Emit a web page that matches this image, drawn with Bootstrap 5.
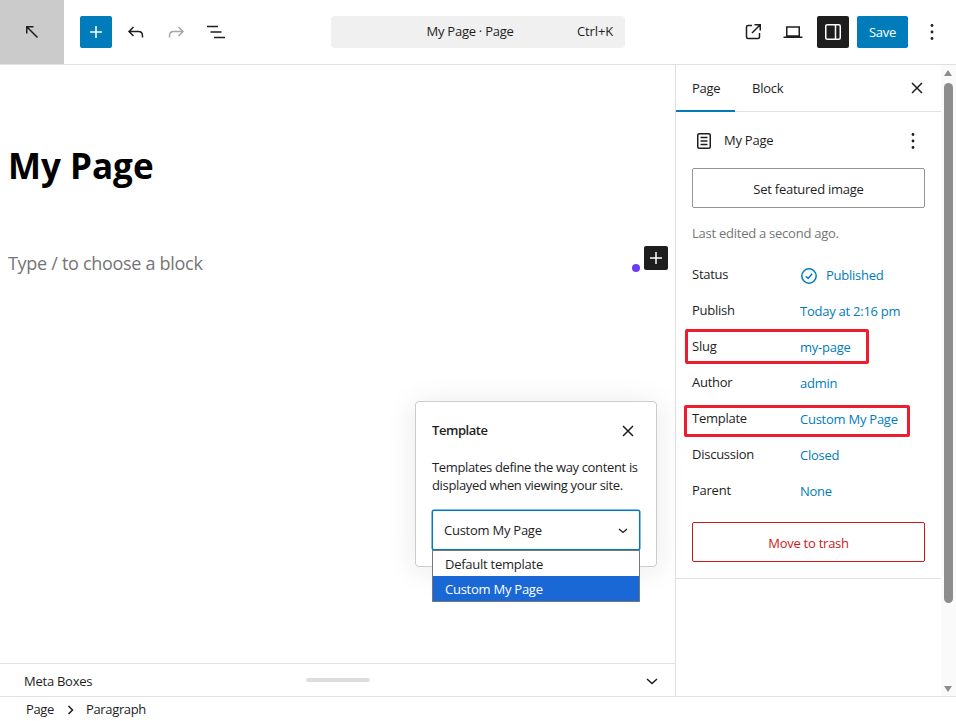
<!DOCTYPE html>
<html lang="en">
<head>
  <meta charset="UTF-8">
  <title>Edit Page</title>
  <meta name="viewport" content="width=device-width, initial-scale=1">
  <link href="https://cdn.jsdelivr.net/npm/bootstrap@5.3.0/dist/css/bootstrap.min.css" rel="stylesheet">
  <style>
    html, body { height: 100%; overflow: hidden; }
    body {
      font-family: "Open Sans", "Noto Sans", "Liberation Sans", sans-serif;
      font-size: 13px;
      letter-spacing: -0.25px;
      color: #1e1e1e;
      background: #fff;
    }
    .shell { height: 721px; }
    .topbar { height: 65px; border-bottom: 1px solid #e0e0e0; }
    .wp-logo { width: 64px; height: 64px; background: #cbcbcb; }
    .tool-left { padding-left: 16px; gap: 8px; width: 267px; }
    .icon-btn { width: 32px; height: 32px; border-radius: 2px; color: #1e1e1e; }
    .icon-btn.is-blue { background: #007cba; color: #fff; }
    .icon-btn.is-dark { background: #1e1e1e; color: #fff; }
    .icon-btn.is-off { color: #a7a7a7; }
    .cmd-bar {
      width: 294px; height: 32px; background: #f0f0f0; border-radius: 4px;
      padding: 0 12px 0 0;
    }
    .cmd-title { flex: 1; text-align: center; padding-left: 32px; }
    .cmd-key { letter-spacing: -0.15px; }
    .tool-right { padding-right: 8px; gap: 8px; }
    .save-btn {
      width: 51px; height: 32px; background: #007cba; color: #fff; border-radius: 2px;
      font-size: 13px; letter-spacing: -.25px; padding: 2px 0 0;
    }
    .editor-col { width: 676px; border-right: 1px solid #e0e0e0; }
    .canvas { flex: 1; }
    .page-title {
      font-family: "Open Sans", "Noto Sans", sans-serif;
      font-size: 35px; font-weight: 700; color: #000; line-height: 40px;
      letter-spacing: 0; padding: 81px 0 0 8px; margin: 0;
    }
    .placeholder-line { font-size: 18px; color: #757575; padding: 64px 0 0 8px; letter-spacing: -0.3px; line-height: 26px; }
    .purple-dot { position: absolute; left: 632px; top: 199px; width: 8px; height: 8px; border-radius: 50%; background: #6c3cf0; }
    .add-block { position: absolute; left: 644px; top: 181px; width: 24px; height: 24px; background: #1e1e1e; color: #fff; border-radius: 2px; }
    .tpl-pop {
      position: absolute; left: 415px; top: 336px; width: 242px; height: 166px;
      background: #fff; border: 1px solid #ccc; border-radius: 4px;
      box-shadow: 0 3px 30px rgba(25, 30, 35, .1); padding: 16px;
    }
    .tpl-head { height: 26px; font-weight: 600; margin-bottom: 14px; letter-spacing: -.45px; }
    .tpl-text { line-height: 18px; margin: 0 0 16px; letter-spacing: -.35px; white-space: nowrap; }
    .tpl-select {
      height: 40px; border: 1px solid #007cba; border-radius: 2px; padding: 1px 11px 0;
      box-shadow: 0 0 0 .5px #007cba; background: #fff; width: 208px;
    }
    .tpl-options {
      position: absolute; left: 16px; top: 148px; width: 208px; height: 52px;
      background: #fff; border: 1px solid #767676;
    }
    .tpl-opt { height: 25px; padding: 2px 0 0 12px; display: flex; align-items: center; }
    .tpl-opt.is-active { background: #1a68d6; color: #fff; }
    .meta-bar { height: 33px; border-top: 1px solid #e0e0e0; padding: 3px 17px 0 24px; position: relative; }
    .resize-handle { position: absolute; left: 306px; top: 14px; width: 64px; height: 4px; background: #ddd; border-radius: 2px; }
    .side-col { width: 265px; }
    .side-tabs { height: 47px; border-bottom: 1px solid #e0e0e0; }
    .side-tab { height: 47px; padding: 0 16px; display: flex; align-items: center; margin-bottom: -1px; }
    .side-tab.is-on { box-shadow: inset 0 -2px 0 #007cba; width: 59px; margin-right: 1px; }
    .side-x { margin-right: 12px; }
    .side-body { padding: 16px; border-bottom: 1px solid #e0e0e0; height: 467px; }
    .doc-head { height: 26px; margin-bottom: 14px; }
    .featured-btn {
      height: 40px; border: 1px solid #949494; border-radius: 2px; background: #fff;
      width: 233px; font-size: 13px; letter-spacing: -.25px; color: #1e1e1e; padding: 3px 0 0;
    }
    .edited-note { color: #757575; margin: 16px 0 15px; line-height: 18px; }
    .prop-row { height: 36px; display: flex; align-items: center; position: relative; }
    .prop-label { width: 108px; }
    .prop-value { color: #007cba; padding-top: 2px; }
    .red-box { position: absolute; border: 3px solid #ed1c2e; border-radius: 2px; }
    .red-slug { left: -7px; top: 0; width: 184px; height: 35px; }
    .red-template { left: -8px; top: 4px; width: 226px; height: 32px; }
    .trash-btn {
      height: 40px; width: 233px; border: 1px solid #cc1818; border-radius: 2px;
      background: #fff; color: #cc1818; margin-top: 13px; font-size: 13px; letter-spacing: -.25px; padding: 3px 0 0;
    }
    .fake-scroll { width: 15px; background: #fafafa; position: relative; }
    .scroll-up, .scroll-down { position: absolute; left: 3px; width: 0; height: 0; border-left: 4.5px solid transparent; border-right: 4.5px solid transparent; }
    .scroll-up { top: 5px; border-bottom: 6px solid #8d8d8d; }
    .scroll-down { bottom: 4px; border-top: 6px solid #8d8d8d; }
    .scroll-thumb { position: absolute; left: 3px; top: 18px; width: 9px; height: 520px; background: #8d8d8d; border-radius: 5px; }
    .status-foot { height: 25px; border-top: 1px solid #e0e0e0; padding: 2px 0 0 26px; gap: 12px; letter-spacing: -.35px; }
    .status-foot svg { margin-left: 1px; }
  </style>
</head>
<body>
<div class="shell d-flex flex-column">

  <div class="topbar d-flex align-items-center">
    <div class="wp-logo d-flex align-items-center justify-content-center">
      <svg width="24" height="24" viewBox="0 0 24 24" fill="none" stroke="#1e1e1e" stroke-width="1.5"><path d="M6 6.750h7.500M6.750 6v7.500M6.500 6.500l11 11"/></svg>
    </div>
    <div class="tool-left d-flex align-items-center">
      <div class="icon-btn is-blue d-flex align-items-center justify-content-center">
        <svg width="24" height="24" viewBox="0 0 24 24" fill="none" stroke="currentColor" stroke-width="1.5"><path d="M12 6v12M6 12h12"/></svg>
      </div>
      <div class="icon-btn d-flex align-items-center justify-content-center">
        <svg width="24" height="24" viewBox="0 0 24 24" fill="none" stroke="currentColor" stroke-width="1.5"><path d="M9.500 7 5 11.500 9.500 16M5 11.500h9.500c2.500 0 4 1.500 4 4.500v1.500"/></svg>
      </div>
      <div class="icon-btn is-off d-flex align-items-center justify-content-center">
        <svg width="24" height="24" viewBox="0 0 24 24" fill="none" stroke="currentColor" stroke-width="1.5"><path d="M14.500 7 19 11.500 14.500 16M19 11.500H9.500c-2.500 0-4 1.500-4 4.500v1.500"/></svg>
      </div>
      <div class="icon-btn d-flex align-items-center justify-content-center">
        <svg width="24" height="24" viewBox="0 0 24 24" fill="none" stroke="currentColor" stroke-width="1.5"><path d="M3 6.500h11M6.500 12h11M10 17.500h11"/></svg>
      </div>
    </div>
    <div class="cmd-bar d-flex align-items-center">
      <span class="cmd-title">My Page · Page</span>
      <span class="cmd-key">Ctrl+K</span>
    </div>
    <div class="tool-right ms-auto d-flex align-items-center">
      <div class="icon-btn d-flex align-items-center justify-content-center">
        <svg width="24" height="24" viewBox="0 0 24 24" fill="none" stroke="currentColor" stroke-width="1.5"><path d="M11 5.500H7A1.500 1.500 0 0 0 5.500 7v10A1.500 1.500 0 0 0 7 18.500h10a1.500 1.500 0 0 0 1.500-1.500v-4M13.500 4.750h5.750v5.750M19 5l-8 8"/></svg>
      </div>
      <div class="icon-btn d-flex align-items-center justify-content-center">
        <svg width="24" height="24" viewBox="0 0 24 24" fill="none" stroke="currentColor" stroke-width="1.500"><path d="M5.750 7h12.500v9H5.750zM2.500 17.250h19"/></svg>
      </div>
      <div class="icon-btn is-dark d-flex align-items-center justify-content-center">
        <svg width="24" height="24" viewBox="0 0 24 24" fill="none" stroke="currentColor" stroke-width="1.500"><rect x="4.750" y="4.750" width="14.500" height="14.500" rx="1.500"/><path d="M14.500 5v14"/></svg>
      </div>
      <button type="button" class="btn save-btn border-0">Save</button>
      <div class="icon-btn d-flex align-items-center justify-content-center">
        <svg width="24" height="24" viewBox="0 0 24 24" fill="currentColor"><circle cx="12" cy="5.500" r="1.400"/><circle cx="12" cy="12" r="1.400"/><circle cx="12" cy="18.500" r="1.400"/></svg>
      </div>
    </div>
  </div>

  <div class="d-flex flex-grow-1 overflow-hidden">
    <div class="editor-col d-flex flex-column">
      <div class="canvas position-relative">
        <h1 class="page-title">My Page</h1>
        <div class="placeholder-line">Type / to choose a block</div>
        <span class="purple-dot"></span>
        <div class="add-block d-flex align-items-center justify-content-center">
          <svg width="24" height="24" viewBox="0 0 24 24" fill="none" stroke="currentColor" stroke-width="1.500"><path d="M12 6v12M6 12h12"/></svg>
        </div>

        <div class="tpl-pop">
          <div class="tpl-head d-flex align-items-center justify-content-between">
            <span>Template</span>
            <svg width="24" height="24" viewBox="0 0 24 24" fill="none" stroke="#1e1e1e" stroke-width="1.500"><path d="M7 7l10 10M17 7 7 17"/></svg>
          </div>
          <p class="tpl-text">Templates define the way content is<br>displayed when viewing your site.</p>
          <div class="tpl-select d-flex align-items-center justify-content-between">
            <span>Custom My Page</span>
            <svg width="10" height="6" viewBox="0 0 10 6" fill="none" stroke="#1e1e1e" stroke-width="1.300"><path d="M1 1l4 3.500L9 1"/></svg>
          </div>
          <div class="tpl-options">
            <div class="tpl-opt">Default template</div>
            <div class="tpl-opt is-active">Custom My Page</div>
          </div>
        </div>
      </div>
      <div class="meta-bar d-flex align-items-center justify-content-between">
        <span>Meta Boxes</span>
        <span class="resize-handle"></span>
        <svg width="12" height="7" viewBox="0 0 12 7" fill="none" stroke="#1e1e1e" stroke-width="1.500"><path d="M1 1l5 4.500L11 1"/></svg>
      </div>
    </div>

    <div class="side-col">
      <div class="side-tabs d-flex align-items-center">
        <div class="side-tab is-on">Page</div>
        <div class="side-tab">Block</div>
        <svg class="ms-auto side-x" width="24" height="24" viewBox="0 0 24 24" fill="none" stroke="#1e1e1e" stroke-width="1.500"><path d="M7 7l10 10M17 7 7 17"/></svg>
      </div>
      <div class="side-body">
        <div class="doc-head d-flex align-items-center">
          <svg width="24" height="24" viewBox="0 0 24 24" fill="none" stroke="#1e1e1e" stroke-width="1.500"><rect x="5.750" y="4.750" width="12.500" height="14.500" rx="1.500"/><path d="M8.500 8.500h7M8.500 12h7M8.500 15.500h7"/></svg>
          <span class="ms-2">My Page</span>
          <svg class="ms-auto" width="24" height="24" viewBox="0 0 24 24" fill="#1e1e1e"><circle cx="12" cy="5.500" r="1.400"/><circle cx="12" cy="12" r="1.400"/><circle cx="12" cy="18.500" r="1.400"/></svg>
        </div>
        <button type="button" class="btn featured-btn">Set featured image</button>
        <p class="edited-note">Last edited a second ago.</p>
        <div class="prop-row"><span class="prop-label">Status</span>
          <span class="prop-value d-flex align-items-center">
            <svg width="18" height="18" viewBox="0 0 18 18" fill="none" stroke="#007cba" stroke-width="1.500"><circle cx="9" cy="9" r="7.200"/><path d="M5.800 9.200l2.300 2.300 4.100-4.700"/></svg>
            <span class="ms-2">Published</span>
          </span>
        </div>
        <div class="prop-row"><span class="prop-label">Publish</span><span class="prop-value">Today at 2:16 pm</span></div>
        <div class="prop-row"><span class="prop-label">Slug</span><span class="prop-value">my-page</span><span class="red-box red-slug"></span></div>
        <div class="prop-row"><span class="prop-label">Author</span><span class="prop-value">admin</span></div>
        <div class="prop-row"><span class="prop-label">Template</span><span class="prop-value">Custom My Page</span><span class="red-box red-template"></span></div>
        <div class="prop-row"><span class="prop-label">Discussion</span><span class="prop-value">Closed</span></div>
        <div class="prop-row"><span class="prop-label">Parent</span><span class="prop-value">None</span></div>
        <button type="button" class="btn trash-btn">Move to trash</button>
      </div>
    </div>

    <div class="fake-scroll">
      <span class="scroll-up"></span>
      <span class="scroll-thumb"></span>
      <span class="scroll-down"></span>
    </div>
  </div>

  <div class="status-foot d-flex align-items-center">
    <span>Page</span>
    <svg width="7" height="10" viewBox="0 0 7 10" fill="none" stroke="#1e1e1e" stroke-width="1.500"><path d="M1.500 1l4 4-4 4"/></svg>
    <span>Paragraph</span>
  </div>
</div>
</body>
</html>
